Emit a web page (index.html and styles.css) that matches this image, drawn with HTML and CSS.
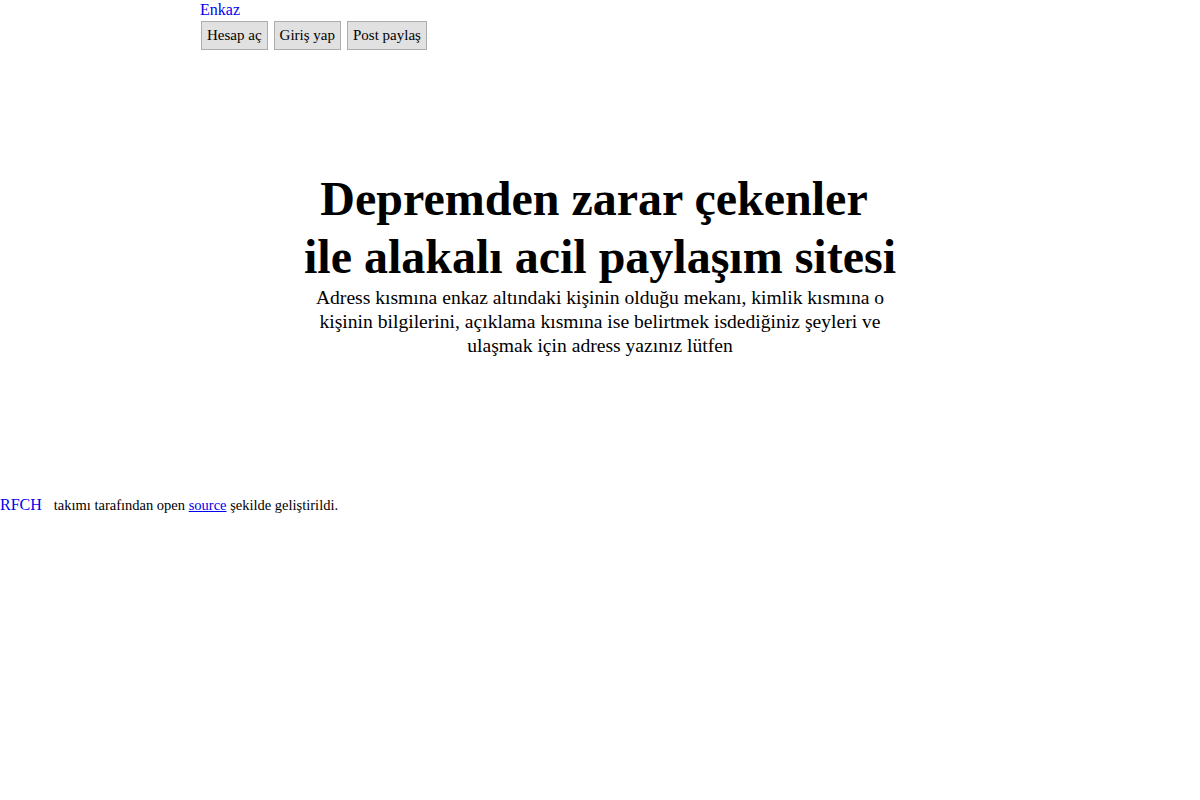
FILE: index.html
```html
<!DOCTYPE html>
<html lang="tr">
<head>
<meta charset="utf-8">
<title>Enkaz</title>
<link rel="stylesheet" href="styles.css">
</head>
<body>
<header class="nav">
  <a class="brand" href="#">Enkaz</a>
  <div class="buttons">
    <button class="btn">Hesap aç</button>
    <button class="btn">Giriş yap</button>
    <button class="btn">Post paylaş</button>
  </div>
</header>
<main class="hero">
  <h1 class="title">Depremden zarar çekenler&nbsp;<br>ile alakalı acil paylaşım sitesi</h1>
  <p class="lead">Adress kısmına enkaz altındaki kişinin olduğu mekanı, kimlik kısmına o kişinin bilgilerini, açıklama kısmına ise belirtmek isdediğiniz şeyleri ve ulaşmak için adress yazınız lütfen</p>
</main>
<footer class="footer">
  <a class="team" href="#">RFCH</a>
  <span class="credit">takımı tarafından open <a class="src" href="#">source</a> şekilde geliştirildi.</span>
</footer>
</body>
</html>
```
FILE: styles.css
```css
html, body {
  margin: 0;
  padding: 0;
  background: #fff;
}
body {
  font-family: "Liberation Serif", "Times New Roman", serif;
  color: #000;
}
.nav {
  padding-left: 200px;
}
.brand {
  display: block;
  color: #0000ee;
  text-decoration: none;
  font-size: 16px;
  line-height: 20px;
}
.buttons {
  display: flex;
  gap: 6px;
  margin-top: 1px;
  padding-left: 1px;
}
.btn {
  font-family: "Liberation Serif", "Times New Roman", serif;
  font-size: 15px;
  line-height: 17px;
  padding: 5px 5px;
  background: #e1e1e1;
  border: 1px solid #adadad;
  color: #000;
  border-radius: 0;
  margin: 0;
}
.hero {
  width: 600px;
  margin: 120px auto 0;
  text-align: center;
}
.title {
  font-size: 48px;
  line-height: 58px;
  font-weight: bold;
  margin: 0;
}
.lead {
  font-size: 19.6px;
  line-height: 24px;
  margin: 0;
}
.footer {
  margin-top: 138px;
  font-size: 14.5px;
  display: flex;
  align-items: baseline;
  gap: 12px;
}
.team {
  color: #0000ee;
  text-decoration: none;
  font-size: 16px;
}
.src {
  color: #0000ee;
}
```
